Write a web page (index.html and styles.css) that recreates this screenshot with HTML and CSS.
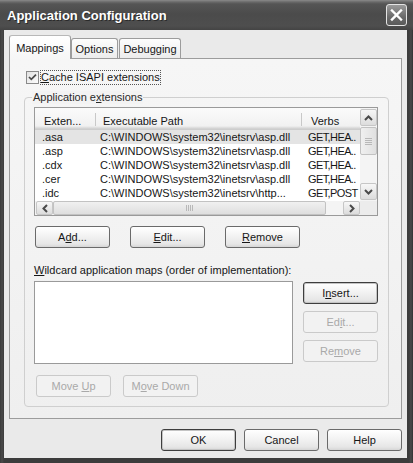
FILE: index.html
```html
<!DOCTYPE html>
<html>
<head>
<meta charset="utf-8">
<link rel="stylesheet" href="styles.css">
</head>
<body>
<div class="window">
  <div class="titlebar">
    <span class="title">Application Configuration</span>
    <span class="close">
      <svg width="19" height="20" viewBox="0 0 19 20"><path d="M5 5.5 L14 14.5 M14 5.5 L5 14.5" stroke="#fff" stroke-width="2.4" stroke-linecap="square"/></svg>
    </span>
  </div>
  <div class="client">
    <div class="tabs">
      <div class="tab tab-sel"><span>Mappings</span></div>
      <div class="tab tab-opt"><span>Options</span></div>
      <div class="tab tab-dbg"><span>Debugging</span></div>
    </div>
    <div class="panel">
      <div class="check-row">
        <span class="checkbox">
          <svg width="11" height="11" viewBox="0 0 11 11"><path d="M2 5 L4.3 7.4 L9 2.6" fill="none" stroke="#4a4a4a" stroke-width="1.7"/></svg>
        </span>
        <span class="focus"><u>C</u>ache ISAPI extensions</span>
      </div>
      <div class="group">
        <div class="legend">Application e<u>x</u>tensions</div>
        <div class="listview">
          <div class="lv-top">
            <div class="lv-body">
              <div class="lv-header">
                <div class="hc c1">Exten...</div>
                <div class="hc c2">Executable Path</div>
                <div class="hc c3">Verbs</div>
              </div>
              <div class="lv-row lv-sel">
                <div class="cell c1">.asa</div><div class="cell c2">C:\WINDOWS\system32\inetsrv\asp.dll</div><div class="cell c3">GET,HEA..</div>
              </div>
              <div class="lv-row">
                <div class="cell c1">.asp</div><div class="cell c2">C:\WINDOWS\system32\inetsrv\asp.dll</div><div class="cell c3">GET,HEA..</div>
              </div>
              <div class="lv-row">
                <div class="cell c1">.cdx</div><div class="cell c2">C:\WINDOWS\system32\inetsrv\asp.dll</div><div class="cell c3">GET,HEA..</div>
              </div>
              <div class="lv-row">
                <div class="cell c1">.cer</div><div class="cell c2">C:\WINDOWS\system32\inetsrv\asp.dll</div><div class="cell c3">GET,HEA..</div>
              </div>
              <div class="lv-row">
                <div class="cell c1">.idc</div><div class="cell c2">C:\WINDOWS\system32\inetsrv\http...</div><div class="cell c3">GET,POST</div>
              </div>
            </div>
            <div class="vscroll">
              <div class="sb-btn">
                <svg width="9" height="6" viewBox="0 0 9 6"><path d="M1 5 L4.5 1.5 L8 5" fill="none" stroke="#4a4a4a" stroke-width="2"/></svg>
              </div>
              <div class="vthumb"><span class="grip-h"></span></div>
              <div class="vtrack"></div>
              <div class="sb-btn">
                <svg width="9" height="6" viewBox="0 0 9 6"><path d="M1 1 L4.5 4.5 L8 1" fill="none" stroke="#4a4a4a" stroke-width="2"/></svg>
              </div>
            </div>
          </div>
          <div class="lv-bottom">
            <div class="hscroll">
              <div class="sb-btn sb-h">
                <svg width="6" height="9" viewBox="0 0 6 9"><path d="M5 1 L1.5 4.5 L5 8" fill="none" stroke="#4a4a4a" stroke-width="2"/></svg>
              </div>
              <div class="hthumb"><span class="grip-v"></span></div>
              <div class="htrack"></div>
              <div class="sb-btn sb-h">
                <svg width="6" height="9" viewBox="0 0 6 9"><path d="M1 1 L4.5 4.5 L1 8" fill="none" stroke="#4a4a4a" stroke-width="2"/></svg>
              </div>
            </div>
            <div class="corner"></div>
          </div>
        </div>
        <div class="btn-row">
          <div class="btn"><span>A<u>d</u>d...</span></div>
          <div class="btn"><span><u>E</u>dit...</span></div>
          <div class="btn"><span><u>R</u>emove</span></div>
        </div>
        <div class="wild-label"><u>W</u>ildcard application maps (order of implementation):</div>
        <div class="wild-row">
          <div class="listbox"></div>
          <div class="side-btns">
            <div class="btn btn-default"><span>I<u>n</u>sert...</span></div>
            <div class="btn btn-dis"><span>Ed<u>i</u>t...</span></div>
            <div class="btn btn-dis"><span>Re<u>m</u>ove</span></div>
          </div>
        </div>
        <div class="move-row">
          <div class="btn btn-dis"><span>Move <u>U</u>p</span></div>
          <div class="btn btn-dis"><span>M<u>o</u>ve Down</span></div>
        </div>
      </div>
    </div>
    <div class="dlg-btns">
      <div class="btn btn-default"><span>OK</span></div>
      <div class="btn"><span>Cancel</span></div>
      <div class="btn"><span>Help</span></div>
    </div>
  </div>
</div>
</body>
</html>
```

FILE: styles.css
```css
* { box-sizing: border-box; }
html, body { margin: 0; padding: 0; background: #3e3e3e; }
body {
  font-family: "Liberation Sans", Arial, sans-serif;
  font-size: 11px;
  line-height: 13px;
  color: #161616;
}
u { text-decoration: underline; text-underline-offset: 1px; }

.window {
  width: 413px;
  height: 463px;
  display: flex;
  flex-direction: column;
  background: linear-gradient(90deg, #3a3a3a 0, #4a4a4a 2px, #3c3c3c 4px, #3c3c3c 409px, #4a4a4a 411px, #333 413px);
}

.titlebar {
  flex: none;
  height: 30px;
  display: flex;
  align-items: center;
  justify-content: space-between;
  padding: 0 6px 0 7px;
  background: linear-gradient(#8a8a8a 0, #6a6a6a 2px, #555 4px, #4b4b4b 14px, #4e4e4e 26px, #444 30px);
}
.title {
  font-weight: bold;
  font-size: 13px;
  line-height: 15px;
  color: #fff;
  text-shadow: 1px 1px 0 #2a2a2a;
}
.close {
  width: 21px;
  height: 22px;
  border: 1px solid #e4e4e4;
  border-radius: 3px;
  background: linear-gradient(#9a9a9a, #6a6a6a 60%, #5a5a5a);
  display: flex;
  align-items: center;
  justify-content: center;
}

.client {
  flex: 1;
  margin: 0 6px 5px 4px;
  background: #eaeaea;
  display: flex;
  flex-direction: column;
  padding: 5px 5px 7px 5px;
}

.tabs {
  height: 23px;
  display: flex;
  align-items: flex-end;
  flex: none;
}
.tab {
  height: 20px;
  border: 1px solid #9c9c9c;
  border-bottom: none;
  border-radius: 3px 3px 0 0;
  background: linear-gradient(#fdfdfd, #ececec);
  display: flex;
  align-items: center;
  justify-content: center;
  padding-top: 1px;
}
.tab-sel {
  width: 62px;
  height: 24px;
  margin-bottom: -1px;
  position: relative;
  z-index: 1;
  background: linear-gradient(#ffffff, #f6f6f6);
  border-top-color: #b8b8b8;
}
.tab-opt { width: 47px; }
.tab-dbg { width: 62px; margin-left: 1px; }

.panel {
  width: 393px;
  height: 361px;
  flex: none;
  border: 1px solid #9c9c9c;
  background: linear-gradient(#f6f6f6, #efefef);
  display: flex;
  flex-direction: column;
  padding: 11px 12px 0 14px;
}

.check-row {
  height: 15px;
  display: flex;
  align-items: center;
  margin-left: 2px;
}
.checkbox {
  width: 13px;
  height: 13px;
  border: 1px solid #8a8a8a;
  background: linear-gradient(135deg, #e2e2e2, #fbfbfb);
  display: flex;
  align-items: center;
  justify-content: center;
}
.focus {
  margin-left: 1px;
  border: 1px dotted #555;
  line-height: 13px;
}

.group {
  margin-top: 12px;
  border: 1px solid #cfcfcf;
  border-radius: 4px;
  display: flex;
  flex-direction: column;
  padding-bottom: 9px;
}
.legend {
  align-self: flex-start;
  margin-top: -7px;
  margin-left: 7px;
  padding: 0 1px;
  background: #f3f3f3;
  color: #2a2a2a;
  height: 13px;
}

.listview {
  margin: 3px 0 0 9px;
  width: 344px;
  height: 109px;
  border: 1px solid #9a9a9a;
  background: #fff;
  display: flex;
  flex-direction: column;
}
.lv-top {
  height: 93px;
  display: flex;
}
.lv-body {
  width: 325px;
  overflow: hidden;
  display: flex;
  flex-direction: column;
}
.lv-header {
  height: 22px;
  flex: none;
  display: flex;
  background: linear-gradient(#fbfbfb 0, #f1f1f1 18px, #e4e4e4 19px, #d9d9d9 20px, #cdcdcd 21px);
}
.hc {
  padding-top: 7px;
  white-space: nowrap;
  position: relative;
}
.c1 { width: 61px; flex: none; }
.c2 { width: 206px; flex: none; }
.c3 { flex: 1; white-space: nowrap; overflow: hidden; }
.hc.c1 { padding-left: 9px; }
.hc.c2 { padding-left: 7px; }
.hc.c3 { padding-left: 9px; }
.hc.c1::after, .hc.c2::after {
  content: "";
  position: absolute;
  right: 0;
  top: 5px;
  height: 13px;
  width: 1px;
  background: #c8c8c8;
}
.lv-row {
  height: 14px;
  line-height: 14px;
  display: flex;
  white-space: nowrap;
}
.lv-sel { background: #e4e4e4; }
.cell.c1 { padding-left: 7px; }
.cell.c2 { padding-left: 4px; overflow: hidden; }
.cell.c3 { padding-left: 6px; letter-spacing: -0.6px; }

.vscroll {
  width: 17px;
  display: flex;
  flex-direction: column;
  background: #f4f4f4;
  padding: 1px 0;
}
.sb-btn {
  height: 17px;
  flex: none;
  border: 1px solid #c6c6c6;
  border-radius: 2px;
  background: linear-gradient(#f7f7f7, #dcdcdc);
  display: flex;
  align-items: center;
  justify-content: center;
}
.vthumb {
  height: 28px;
  margin-top: 1px;
  border: 1px solid #c2c2c2;
  border-radius: 2px;
  background: linear-gradient(90deg, #f0f0f0, #e0e0e0);
  display: flex;
  align-items: center;
  justify-content: center;
}
.grip-h {
  width: 7px;
  height: 7px;
  background: repeating-linear-gradient(#b8b8b8 0 1px, transparent 1px 2px);
}
.vtrack { flex: 1; }

.lv-bottom {
  height: 14px;
  display: flex;
}
.hscroll {
  width: 325px;
  display: flex;
  background: #f4f4f4;
  padding: 0 0 0 1px;
}
.sb-h { width: 17px; height: 14px; }
.hthumb {
  width: 273px;
  border: 1px solid #c2c2c2;
  border-radius: 2px;
  background: linear-gradient(#f0f0f0, #dedede);
  display: flex;
  align-items: center;
  justify-content: center;
}
.grip-v {
  width: 7px;
  height: 6px;
  background: repeating-linear-gradient(90deg, #b8b8b8 0 1px, transparent 1px 2px);
}
.htrack { flex: 1; }
.corner { flex: 1; background: #ececec; }

.btn {
  width: 75px;
  height: 22px;
  border: 1px solid #6a6a6a;
  border-radius: 3px;
  background: linear-gradient(#ffffff 0, #f4f4f4 40%, #e6e6e6 85%, #d6d6d6 100%);
  display: flex;
  align-items: center;
  justify-content: center;
  white-space: nowrap;
}
.btn-default {
  border-color: #3e3e3e;
  box-shadow: inset 0 0 0 1px #c4c4c4;
}
.btn-dis {
  border-color: #cacaca;
  background: #f2f2f2;
  color: #a9a9a9;
}

.btn-row {
  margin: 10px 0 0 10px;
  display: flex;
  gap: 20px;
}
.wild-label {
  margin: 16px 0 0 9px;
  height: 13px;
}
.wild-row {
  margin: 4px 0 0 9px;
  display: flex;
  gap: 10px;
}
.listbox {
  width: 259px;
  height: 83px;
  border: 1px solid #9a9a9a;
  background: #fff;
}
.side-btns {
  margin-top: 1px;
  display: flex;
  flex-direction: column;
  gap: 7px;
}
.move-row {
  margin: 11px 0 0 11px;
  display: flex;
  gap: 12px;
}

.dlg-btns {
  margin-top: 10px;
  display: flex;
  justify-content: flex-end;
  gap: 8px;
}
```
